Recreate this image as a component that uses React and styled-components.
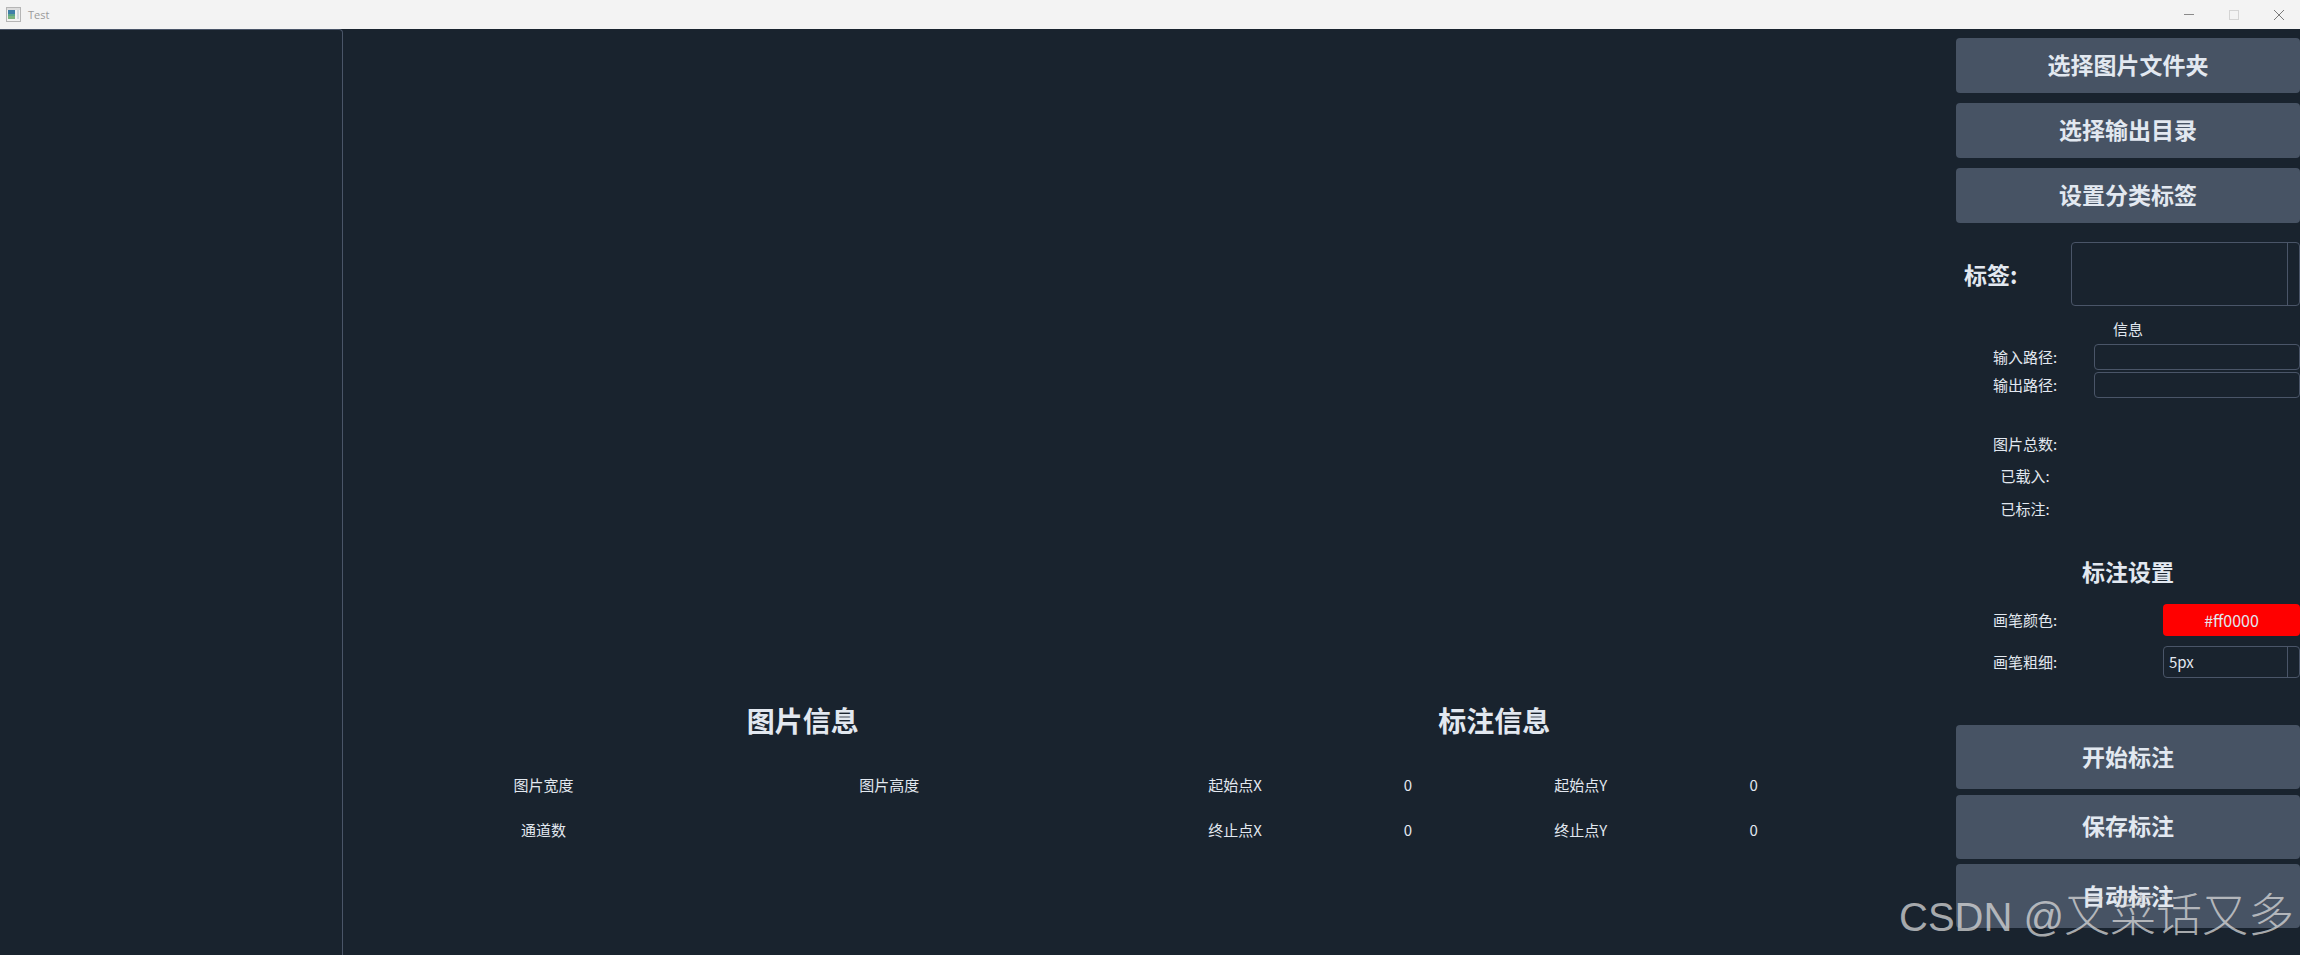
import React from "react";
import styled, { createGlobalStyle } from "styled-components";

const cjk = `"Noto Sans CJK SC", "Noto Sans", sans-serif`;
const line = "#4a5568";
const ground = "#19232e";

const Global = createGlobalStyle`
  html, body { margin: 0; padding: 0; background: ${ground}; }
  #root { width: 2300px; height: 955px; overflow: hidden; }
  * { box-sizing: border-box; }
`;

const Win = styled.div`
  position: relative;
  width: 2300px;
  height: 955px;
  display: flex;
  flex-direction: column;
  background: ${ground};
  color: #e2e8f0;
  font-family: ${cjk};
  overflow: hidden;
`;

const TitleBar = styled.div`
  height: 29px;
  flex: none;
  background: #f3f3f3;
  display: flex;
  align-items: center;
  padding-left: 6px;
`;

const TitleText = styled.span`
  margin-left: 7px;
  font-size: 11px;
  color: #9a9a9a;
  font-family: "Open Sans", sans-serif;
`;

const WinButtons = styled.div`
  margin-left: auto;
  display: flex;
  align-items: center;
  gap: 35px;
  padding-right: 16px;
`;

const Body = styled.div`
  flex: 1;
  display: flex;
  min-height: 0;
`;

const Tree = styled.div`
  width: 343px;
  flex: none;
  border-top: 1px solid ${line};
  border-right: 1px solid ${line};
  border-top-right-radius: 4px;
`;

const Center = styled.div`
  flex: 1;
  display: flex;
  flex-direction: column;
  justify-content: flex-end;
  padding: 0 116px 103px 114px;
`;

const InfoGrid = styled.div`
  display: grid;
  grid-template-columns: 1fr 1fr;
`;

const InfoGroup = styled.section`
  display: flex;
  flex-direction: column;
  align-items: stretch;
`;

const GroupTitle = styled.h2`
  margin: 0 0 22px;
  height: 40px;
  line-height: 40px;
  text-align: center;
  font-size: 28px;
  font-weight: 700;
`;

const Table = styled.div`
  display: grid;
  grid-template-columns: repeat(4, 1fr);
  grid-auto-rows: 45px;
  align-items: center;
  font-size: 15px;
`;

const Cell = styled.div`
  text-align: center;
  line-height: 22px;
`;

const Side = styled.aside`
  width: 344px;
  flex: none;
  display: flex;
  flex-direction: column;
  padding-top: 9px;
`;

const BigButton = styled.button`
  display: block;
  width: 100%;
  height: ${p => p.$h}px;
  margin-bottom: ${p => p.$gap}px;
  border: none;
  border-radius: 4px;
  background: #475364;
  color: #e2e8f0;
  font: 700 23px ${cjk};
  padding: 0 0 3px;
  flex: none;
`;

const TagRow = styled.div`
  margin-top: 9px;
  height: 64px;
  display: flex;
  align-items: center;
  flex: none;
`;

const TagLabel = styled.label`
  width: 115px;
  padding-left: 8px;
  font-size: 23px;
  font-weight: 700;
`;

const Combo = styled.div`
  flex: 1;
  align-self: stretch;
  border: 1px solid ${line};
  border-radius: 4px;
  display: flex;
  font-size: 15px;
  align-items: stretch;
`;

const ComboValue = styled.div`
  flex: 1;
  padding-left: 5px;
  line-height: 29px;
`;

const ComboArrow = styled.div`
  width: 13px;
  margin-right: -1px;
  flex: none;
  border-left: 1px solid ${line};
`;

const SectionCaption = styled.div`
  text-align: center;
  font-size: 15px;
  line-height: 22px;
  margin-top: 12px;
  height: 26px;
`;

const PathRow = styled.div`
  display: flex;
  align-items: center;
  height: 26px;
  margin-bottom: 2px;
  flex: none;
`;

const RowLabel = styled.span`
  width: 138px;
  flex: none;
  text-align: center;
  font-size: 15px;
  line-height: 22px;
`;

const PathInput = styled.div`
  flex: 1;
  height: 26px;
  border: 1px solid ${line};
  border-radius: 4px;
`;

const StatList = styled.div`
  margin-top: 28px;
  display: flex;
  flex-direction: column;
`;

const StatRow = styled.div`
  height: ${p => p.$h}px;
  display: flex;
  align-items: center;
`;

const SettingTitle = styled.h3`
  margin: 28px 0 16px;
  height: 34px;
  line-height: 34px;
  text-align: center;
  font-size: 23px;
  font-weight: 700;
`;

const SettingRow = styled.div`
  height: ${p => p.$h}px;
  margin-bottom: ${p => p.$gap}px;
  display: flex;
  align-items: center;
  justify-content: space-between;
  flex: none;
`;

const ColorButton = styled.div`
  width: 137px;
  height: 100%;
  border-radius: 4px;
  background: #ff0000;
  color: #e2e8f0;
  font-size: 16px;
  display: flex;
  align-items: center;
  justify-content: center;
`;

const SpinBox = styled(Combo)`
  flex: none;
  width: 137px;
  height: 100%;
`;

const ActionStack = styled.div`
  margin-top: 47px;
  display: flex;
  flex-direction: column;
`;

const Watermark = styled.div`
  position: absolute;
  left: 1899px;
  top: 884px;
  font-family: "Liberation Sans", sans-serif;
  font-size: 40px;
  line-height: 54px;
  white-space: nowrap;
  color: rgba(222, 222, 222, 0.72);
`;

const WatermarkName = styled.span`
  font-family: "Noto Sans CJK SC", sans-serif;
  font-size: 46px;
  font-weight: 300;
`;

const AppIcon = () => (
  <svg width="15" height="15" viewBox="0 0 15 15">
    <rect x="0.5" y="0.5" width="14" height="14" fill="#f2f2f2" stroke="#b5b5b5" />
    <rect x="1" y="1" width="13" height="2" fill="#dcdcdc" />
    <rect x="2" y="3" width="7" height="9" fill="#5aa58c" />
    <rect x="2" y="3" width="7" height="4" fill="#3f7fa8" />
    <rect x="2" y="9" width="7" height="3" fill="#7ab37e" />
    <rect x="11" y="3" width="2" height="9" fill="#cfd8dc" />
  </svg>
);

const MinIcon = () => (
  <svg width="10" height="10" viewBox="0 0 10 10">
    <path d="M0 4.5h10" stroke="#8a8a8a" strokeWidth="1" />
  </svg>
);
const MaxIcon = () => (
  <svg width="10" height="10" viewBox="0 0 10 10">
    <rect x="0.5" y="0.5" width="9" height="9" fill="none" stroke="#d4d4d4" />
  </svg>
);
const CloseIcon = () => (
  <svg width="10" height="10" viewBox="0 0 10 10">
    <path d="M0 0l10 10M10 0l-10 10" stroke="#7a7a7a" strokeWidth="1" />
  </svg>
);

export default function App() {
  return (
    <Win>
      <Global />
      <TitleBar>
        <AppIcon />
        <TitleText>Test</TitleText>
        <WinButtons>
          <MinIcon />
          <MaxIcon />
          <CloseIcon />
        </WinButtons>
      </TitleBar>
      <Body>
        <Tree />
        <Center>
          <InfoGrid>
            <InfoGroup>
              <GroupTitle>图片信息</GroupTitle>
              <Table>
                <Cell>图片宽度</Cell>
                <Cell />
                <Cell>图片高度</Cell>
                <Cell />
                <Cell>通道数</Cell>
              </Table>
            </InfoGroup>
            <InfoGroup>
              <GroupTitle>标注信息</GroupTitle>
              <Table>
                <Cell>起始点X</Cell>
                <Cell>0</Cell>
                <Cell>起始点Y</Cell>
                <Cell>0</Cell>
                <Cell>终止点X</Cell>
                <Cell>0</Cell>
                <Cell>终止点Y</Cell>
                <Cell>0</Cell>
              </Table>
            </InfoGroup>
          </InfoGrid>
        </Center>
        <Side>
          <BigButton $h={55} $gap={10}>选择图片文件夹</BigButton>
          <BigButton $h={55} $gap={10}>选择输出目录</BigButton>
          <BigButton $h={55} $gap={10}>设置分类标签</BigButton>
          <TagRow>
            <TagLabel>标签:</TagLabel>
            <Combo>
              <ComboValue />
              <ComboArrow />
            </Combo>
          </TagRow>
          <SectionCaption>信息</SectionCaption>
          <PathRow>
            <RowLabel>输入路径:</RowLabel>
            <PathInput />
          </PathRow>
          <PathRow>
            <RowLabel>输出路径:</RowLabel>
            <PathInput />
          </PathRow>
          <StatList>
            <StatRow $h={32}><RowLabel>图片总数:</RowLabel></StatRow>
            <StatRow $h={32}><RowLabel>已载入:</RowLabel></StatRow>
            <StatRow $h={34}><RowLabel>已标注:</RowLabel></StatRow>
          </StatList>
          <SettingTitle>标注设置</SettingTitle>
          <SettingRow $h={32} $gap={10}>
            <RowLabel>画笔颜色:</RowLabel>
            <ColorButton>#ff0000</ColorButton>
          </SettingRow>
          <SettingRow $h={32} $gap={0}>
            <RowLabel>画笔粗细:</RowLabel>
            <SpinBox>
              <ComboValue>5px</ComboValue>
              <ComboArrow />
            </SpinBox>
          </SettingRow>
          <ActionStack>
            <BigButton $h={64} $gap={5.5}>开始标注</BigButton>
            <BigButton $h={64} $gap={5.5}>保存标注</BigButton>
            <BigButton $h={64} $gap={0}>自动标注</BigButton>
          </ActionStack>
        </Side>
      </Body>
      <Watermark>CSDN @<WatermarkName>又菜话又多</WatermarkName></Watermark>
    </Win>
  );
}
